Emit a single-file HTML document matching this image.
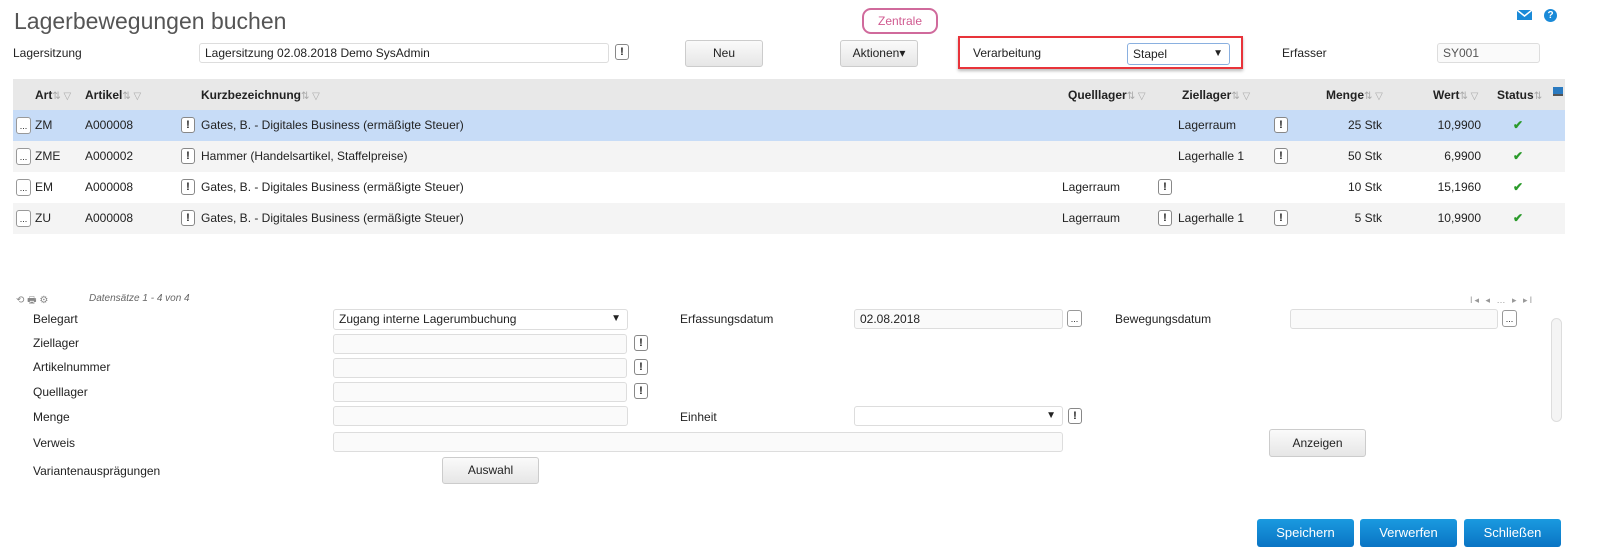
<!DOCTYPE html><html><head><meta charset="utf-8"><style>
*{box-sizing:border-box}
body{margin:0;width:1620px;height:555px;background:#fff;font-family:"Liberation Sans",Arial,sans-serif;font-size:12px;color:#222;position:relative;overflow:hidden}
.a{position:absolute;white-space:nowrap}
.inp{position:absolute;border:1px solid #ddd;border-radius:3px;background:#fafafa;height:20px;padding:1px 5px;line-height:16px;font-size:12px}
.arr{position:absolute;right:6px;top:3px;font-size:10px;line-height:12px}
.ex{position:absolute;width:14px;height:16px;border:1px solid #888;border-radius:3px;background:#fff;font-weight:bold;font-size:11px;text-align:center;line-height:14px}
.dots{position:absolute;width:15px;height:17px;border:1px solid #999;border-radius:3px;background:#fff;font-size:9px;text-align:center;line-height:16px}
.btn{position:absolute;border:1px solid #ccc;border-radius:3px;background:linear-gradient(#fafafa,#e6e6e6);text-align:center;font-size:12px}
.bb{position:absolute;height:28px;width:97px;border-radius:3px;background:linear-gradient(#1a9ae0,#0a74c4);color:#fff;text-align:center;line-height:28px;font-size:13px;top:519px}
.row{position:absolute;left:13px;width:1552px;height:31px}
.h{position:absolute;top:88px;font-weight:bold;font-size:12px}
.h span{color:#aaa;font-weight:normal;font-size:10px}
.c{position:absolute}
.ck{color:#2a9a2a;font-weight:bold}
</style></head><body>
<div class="a" style="left:14px;top:8px;font-size:23px;color:#555">Lagerbewegungen buchen</div>
<div class="a" style="left:862px;top:8px;width:76px;height:26px;border:2px solid #d06a9c;border-radius:9px;color:#d05a90;text-align:center;line-height:22px">Zentrale</div>
<svg class="a" style="left:1517px;top:10px" width="15" height="10"><rect width="15" height="10" fill="#1a8ad8"/><path d="M0 0 L7.5 6 L15 0" stroke="#fff" stroke-width="1.5" fill="none"/></svg>
<div class="a" style="left:1544px;top:9px;width:13px;height:13px;border-radius:50%;background:#1a8ad8;color:#fff;font-size:10px;font-weight:bold;text-align:center;line-height:13px">?</div>

<div class="a" style="left:13px;top:46px">Lagersitzung</div>
<div class="inp" style="left:199px;top:43px;width:410px;background:#fff">Lagersitzung 02.08.2018 Demo SysAdmin</div>
<div class="ex" style="left:615px;top:44px">!</div>
<div class="btn" style="left:685px;top:40px;width:78px;height:27px;line-height:25px">Neu</div>
<div class="btn" style="left:840px;top:40px;width:78px;height:27px;line-height:25px">Aktionen▾</div>
<div class="a" style="left:958px;top:36px;width:285px;height:33px;border:2px solid #e8333a;box-shadow:0 2px 3px #bbb"></div>
<div class="a" style="left:973px;top:46px">Verarbeitung</div>
<div class="inp" style="left:1127px;top:43px;width:103px;height:22px;border-color:#8ab0e0;background:#fff;line-height:18px">Stapel<span class="arr" style="top:4px">▼</span></div>
<div class="a" style="left:1282px;top:46px">Erfasser</div>
<div class="inp" style="left:1437px;top:43px;width:103px;color:#555">SY001</div>

<div class="row" style="top:79px;height:31px;background:#e8e8e8"></div>
<div class="h" style="left:35px">Art<span>⇅ ▽</span></div>
<div class="h" style="left:85px">Artikel<span>⇅ ▽</span></div>
<div class="h" style="left:201px">Kurzbezeichnung<span>⇅ ▽</span></div>
<div class="h" style="left:1068px">Quelllager<span>⇅ ▽</span></div>
<div class="h" style="left:1182px">Ziellager<span>⇅ ▽</span></div>
<div class="h" style="left:1326px">Menge<span>⇅ ▽</span></div>
<div class="h" style="left:1433px">Wert<span>⇅ ▽</span></div>
<div class="h" style="left:1497px">Status<span>⇅</span></div>
<div class="a" style="left:1553px;top:87px;width:10px;height:9px;background:#2a7ac0;border-bottom:2px solid #555"></div>

<div class="row" style="top:110px;background:#c7dcf7"></div>
<div class="row" style="top:141px;background:#f4f4f4"></div>
<div class="row" style="top:172px;background:#fff"></div>
<div class="row" style="top:203px;background:#f4f4f4"></div>

<div class="dots" style="left:16px;top:117px">...</div><div class="c" style="left:35px;top:118px">ZM</div><div class="c" style="left:85px;top:118px">A000008</div><div class="ex" style="left:181px;top:117px">!</div><div class="c" style="left:201px;top:118px">Gates, B. - Digitales Business (ermäßigte Steuer)</div><div class="c" style="left:1178px;top:118px">Lagerraum</div><div class="ex" style="left:1274px;top:117px">!</div><div class="c" style="left:1282px;top:118px;width:100px;text-align:right">25 Stk</div><div class="c" style="left:1381px;top:118px;width:100px;text-align:right">10,9900</div><div class="c ck" style="left:1513px;top:118px">✔</div>

<div class="dots" style="left:16px;top:148px">...</div><div class="c" style="left:35px;top:149px">ZME</div><div class="c" style="left:85px;top:149px">A000002</div><div class="ex" style="left:181px;top:148px">!</div><div class="c" style="left:201px;top:149px">Hammer (Handelsartikel, Staffelpreise)</div><div class="c" style="left:1178px;top:149px">Lagerhalle 1</div><div class="ex" style="left:1274px;top:148px">!</div><div class="c" style="left:1282px;top:149px;width:100px;text-align:right">50 Stk</div><div class="c" style="left:1381px;top:149px;width:100px;text-align:right">6,9900</div><div class="c ck" style="left:1513px;top:149px">✔</div>

<div class="dots" style="left:16px;top:179px">...</div><div class="c" style="left:35px;top:180px">EM</div><div class="c" style="left:85px;top:180px">A000008</div><div class="ex" style="left:181px;top:179px">!</div><div class="c" style="left:201px;top:180px">Gates, B. - Digitales Business (ermäßigte Steuer)</div><div class="c" style="left:1062px;top:180px">Lagerraum</div><div class="ex" style="left:1158px;top:179px">!</div><div class="c" style="left:1282px;top:180px;width:100px;text-align:right">10 Stk</div><div class="c" style="left:1381px;top:180px;width:100px;text-align:right">15,1960</div><div class="c ck" style="left:1513px;top:180px">✔</div>

<div class="dots" style="left:16px;top:210px">...</div><div class="c" style="left:35px;top:211px">ZU</div><div class="c" style="left:85px;top:211px">A000008</div><div class="ex" style="left:181px;top:210px">!</div><div class="c" style="left:201px;top:211px">Gates, B. - Digitales Business (ermäßigte Steuer)</div><div class="c" style="left:1062px;top:211px">Lagerraum</div><div class="ex" style="left:1158px;top:210px">!</div><div class="c" style="left:1178px;top:211px">Lagerhalle 1</div><div class="ex" style="left:1274px;top:210px">!</div><div class="c" style="left:1282px;top:211px;width:100px;text-align:right">5 Stk</div><div class="c" style="left:1381px;top:211px;width:100px;text-align:right">10,9900</div><div class="c ck" style="left:1513px;top:211px">✔</div>

<div class="a" style="left:16px;top:293px;color:#888;font-size:10px">⟲ 🖶 ⚙</div>
<div class="a" style="left:89px;top:293px;color:#666;font-style:italic;font-size:10px">Datensätze 1 - 4 von 4</div>
<div class="a" style="left:1470px;top:295px;color:#999;font-size:9px;letter-spacing:2px">I◂ ◂ … ▸ ▸I</div>

<div class="a" style="left:33px;top:312px">Belegart</div>
<div class="inp" style="left:333px;top:309px;width:295px;height:21px;background:#fff">Zugang interne Lagerumbuchung<span class="arr">▼</span></div>
<div class="a" style="left:33px;top:336px">Ziellager</div><div class="inp" style="left:333px;top:334px;width:294px"></div><div class="ex" style="left:634px;top:335px">!</div>
<div class="a" style="left:33px;top:360px">Artikelnummer</div><div class="inp" style="left:333px;top:358px;width:294px"></div><div class="ex" style="left:634px;top:359px">!</div>
<div class="a" style="left:33px;top:385px">Quelllager</div><div class="inp" style="left:333px;top:382px;width:294px"></div><div class="ex" style="left:634px;top:383px">!</div>
<div class="a" style="left:33px;top:410px">Menge</div><div class="inp" style="left:333px;top:406px;width:295px"></div>
<div class="a" style="left:33px;top:436px">Verweis</div><div class="inp" style="left:333px;top:432px;width:730px"></div>
<div class="a" style="left:33px;top:464px">Variantenausprägungen</div>
<div class="btn" style="left:442px;top:457px;width:97px;height:27px;line-height:25px">Auswahl</div>

<div class="a" style="left:680px;top:312px">Erfassungsdatum</div>
<div class="inp" style="left:854px;top:309px;width:209px">02.08.2018</div><div class="dots" style="left:1067px;top:310px">...</div>
<div class="a" style="left:680px;top:410px">Einheit</div>
<div class="inp" style="left:854px;top:406px;width:209px;background:#fff"><span class="arr">▼</span></div><div class="ex" style="left:1068px;top:408px">!</div>
<div class="a" style="left:1115px;top:312px">Bewegungsdatum</div>
<div class="inp" style="left:1290px;top:309px;width:208px"></div><div class="dots" style="left:1502px;top:310px">...</div>
<div class="btn" style="left:1269px;top:429px;width:97px;height:28px;line-height:26px">Anzeigen</div>
<div class="a" style="left:1551px;top:318px;width:11px;height:104px;border:1px solid #ddd;border-radius:6px;background:#f4f4f4"></div>

<div class="bb" style="left:1257px">Speichern</div>
<div class="bb" style="left:1360px">Verwerfen</div>
<div class="bb" style="left:1464px">Schließen</div>
</body></html>
